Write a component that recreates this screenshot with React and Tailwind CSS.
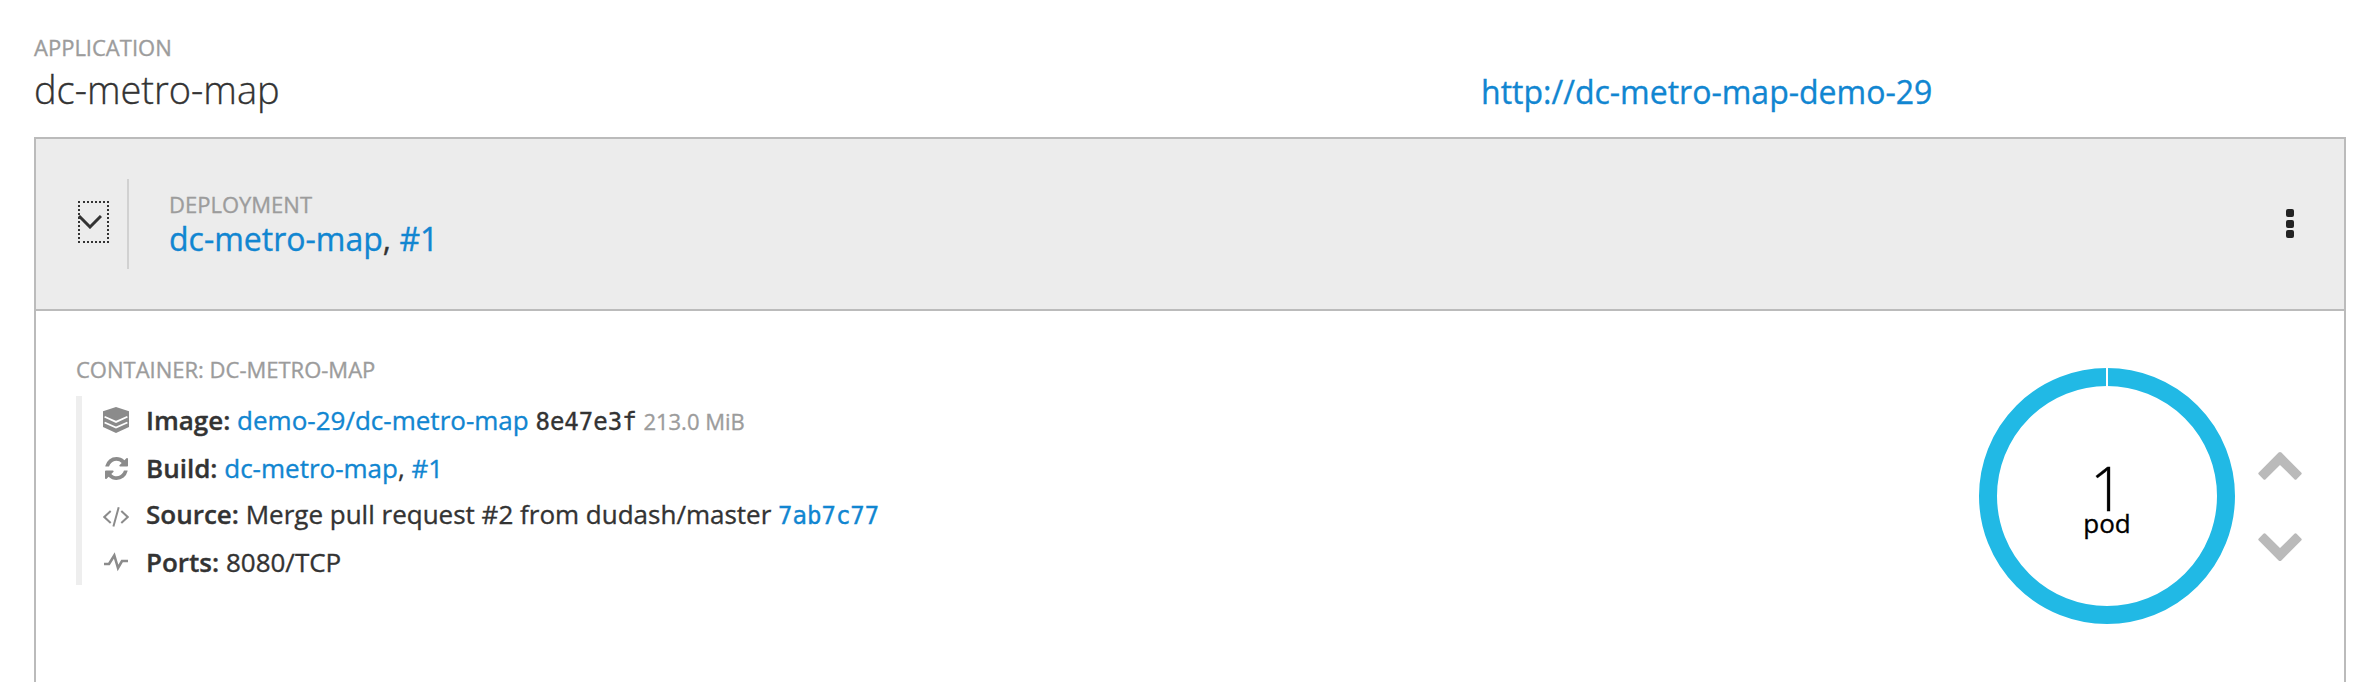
const Label = ({ children }) => (
  <div className="text-[22px] leading-[30px] uppercase text-[#9c9c9c]">{children}</div>
);

const Link = ({ children, className = "" }) => (
  <a className={"text-[#1186d1] " + className}>{children}</a>
);

const LayersIcon = () => (
  <svg width="26" height="26" viewBox="0 0 26 26" className="mb-[2px]">
    <path d="M13 0L26 4.300V20L13 26L0 20V4.300Z" fill="#8b8b8b" />
    <path d="M1.600 9.800L13 14.900L24.400 9.800M1.600 15.500L13 20.600L24.400 15.500" fill="none" stroke="#fff" strokeWidth="1.800" />
  </svg>
);

const RefreshIcon = () => (
  <svg width="23" height="23" viewBox="0 128 1536 1536" fill="#8b8b8b" className="mt-[2px]">
    <path d="M1511 1056q0 5-1 7q-64 268-268 434.500T764 1664q-146 0-282.500-55T238 1452l-129 129q-19 19-45 19t-45-19t-19-45v-448q0-26 19-45t45-19h448q26 0 45 19t19 45t-19 45l-137 137q71 66 161 102t187 36q134 0 250-65t186-179q11-17 53-117q8-23 30-23h192q13 0 22.500 9.500t9.500 22.500zm25-800v448q0 26-19 45t-45 19h-448q-26 0-45-19t-19-45t19-45l138-138Q969 384 768 384q-134 0-250 65T332 628q-11 17-53 117q-8 23-30 23H50q-13 0-22.500-9.500T18 736v-7q65-268 270-434.500T768 128q146 0 284 55.500T1297 339l130-129q19-19 45-19t45 19t19 45z" />
  </svg>
);

const CodeIcon = () => (
  <svg width="26" height="20" viewBox="0 0 26 20" fill="none" stroke="#8b8b8b" strokeWidth="2" className="mt-[4px]">
    <path d="M7.700 4L1.300 10L7.700 16M18.300 4L24.700 10L18.300 16M15.700 0.300L10.400 19.500" />
  </svg>
);

const PulseIcon = () => (
  <svg width="26" height="20" viewBox="0 0 26 20" fill="none" stroke="#8b8b8b" strokeWidth="2.600">
    <path d="M1 12H6L11.300 3.500L15 16L19 9H25" />
  </svg>
);

const Row = ({ icon, label, children }) => (
  <div className="flex h-[47px] items-center">
    <div className="flex w-[26px] justify-center">{icon}</div>
    <div className="ml-[17px] whitespace-pre text-[26px] leading-[36px]">
      <span className="font-semibold">{label}</span> {children}
    </div>
  </div>
);

const Chevron = ({ down }) => (
  <svg width="44" height="28" viewBox="0 0 44 28" fill="#bababa" className={down ? "rotate-180" : ""}>
    <path d="M20.600 0.600Q22 -0.600 23.400 0.600L43.200 20.400Q44.300 21.500 43.200 22.600L38.600 27.200Q37.500 28.300 36.400 27.200L22 12.900L7.600 27.200Q6.500 28.300 5.400 27.200L0.800 22.600Q-0.300 21.500 0.800 20.400Z" />
  </svg>
);

export default function App() {
  return (
    <div className="flex h-[682px] w-full flex-col overflow-hidden bg-white pl-[34px] pr-[28px] pt-8 font-['Open_Sans',sans-serif] text-[#333] [-webkit-text-stroke:0.35px]">
      <header className="flex h-[105px] shrink-0">
        <div className="w-[1447px]">
          <Label>Application</Label>
          <h1 className="text-[38px] font-light leading-[55px]">dc-metro-map</h1>
        </div>
        <Link className="pt-[38px] text-[32px] leading-[44px]">http://dc-metro-map-demo-29</Link>
      </header>
      <main className="h-[600px] shrink-0 border-2 border-[#bbb]">
        <section className="flex h-[172px] items-center justify-between border-b-2 border-[#bbb] bg-[#ececec]">
          <div className="flex items-center">
            <div className="flex h-[90px] w-[93px] items-center border-r-2 border-[#d1d1d1] pl-[42px]">
              <button className="mb-[4px] flex h-[42px] w-[31px] items-center border-2 border-dotted border-[#333]">
                <svg width="24" height="14" viewBox="0 0 24 14" fill="none" stroke="#333" strokeWidth="3" className="-ml-[2px] shrink-0">
                  <path d="M1 1L12 12L23 1" />
                </svg>
              </button>
            </div>
            <div className="h-[90px] pl-[40px] pt-[10px]">
              <Label>Deployment</Label>
              <div className="text-[32px] leading-[40px]">
                <Link>dc-metro-map</Link>, <Link>#1</Link>
              </div>
            </div>
          </div>
          <button className="mb-px mr-[50px] flex flex-col gap-[2.500px]">
            <span className="size-2 rounded-[2px] bg-[#222]" />
            <span className="size-2 rounded-[2px] bg-[#222]" />
            <span className="size-2 rounded-[2px] bg-[#222]" />
          </button>
        </section>
        <section className="flex justify-between">
          <div className="pl-10 pt-[43px]">
            <Label>Container: dc-metro-map</Label>
            <div className="mt-[12px] h-[189px] border-l-[6px] border-[#eee] pl-[21px] pt-[1px]">
              <Row icon={<LayersIcon />} label="Image:">
                <Link>demo-29/dc-metro-map</Link> <span className="font-['DejaVu_Sans_Mono',monospace] text-[24px]">8e47e3f</span> <span className="text-[22px] text-[#9c9c9c]">213.0 MiB</span>
              </Row>
              <Row icon={<RefreshIcon />} label="Build:">
                <Link>dc-metro-map</Link>, <Link>#1</Link>
              </Row>
              <Row icon={<CodeIcon />} label="Source:">
                Merge pull request #2 from dudash/master <Link className="font-['DejaVu_Sans_Mono',monospace] text-[24px]">7ab7c77</Link>
              </Row>
              <Row icon={<PulseIcon />} label="Ports:">8080/TCP</Row>
            </div>
          </div>
          <div className="flex items-start pr-[42px] pt-[57px]">
            <div className="grid">
              <svg width="256" height="256" viewBox="-128 -128 256 256" className="col-start-1 row-start-1">
                <circle r="119" fill="none" stroke="#21b9e5" strokeWidth="18" />
                <path d="M0 -129V-109" stroke="#fff" strokeWidth="2" />
              </svg>
              <div className="col-start-1 row-start-1 flex flex-col items-center pt-[100px] text-black">
                <span className="text-[60px] font-light leading-[40px]">1</span>
                <span className="mt-px text-[26px] leading-[28px]">pod</span>
              </div>
            </div>
            <div className="ml-[23px] flex flex-col gap-[53px] pt-[84px]">
              <Chevron />
              <Chevron down />
            </div>
          </div>
        </section>
      </main>
    </div>
  );
}
